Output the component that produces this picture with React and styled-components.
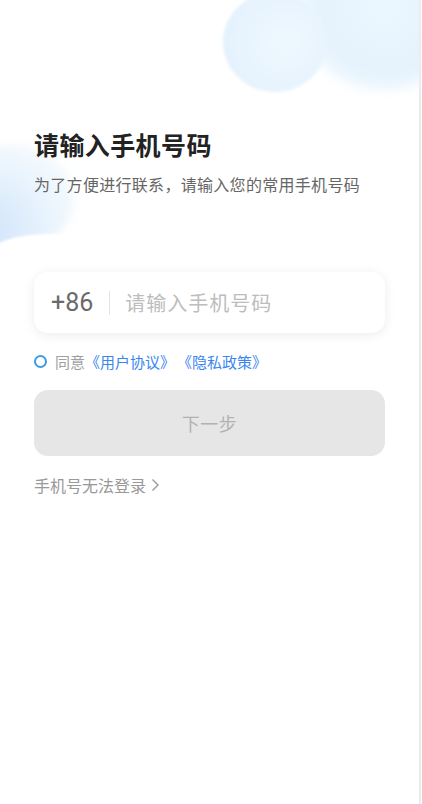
import React from "react";
import styled, { createGlobalStyle } from "styled-components";

const Global = createGlobalStyle`
  html, body { margin: 0; padding: 0; background: #fff; }
  body { font-family: "Noto Sans CJK SC", "Noto Sans", sans-serif; }
  * { box-sizing: border-box; }
`;

const Page = styled.div`
  position: relative;
  width: 421px;
  min-height: 804px;
  background: #fff;
  border-right: 2px solid #ececec;
  overflow: hidden;
`;

const Decor = styled.div`
  position: absolute;
  pointer-events: none;
  border-radius: 50%;
  filter: blur(${(p) => p.$blur || 2}px);
  left: ${(p) => p.$x}px;
  top: ${(p) => p.$y}px;
  width: ${(p) => p.$w}px;
  height: ${(p) => p.$h}px;
  background: ${(p) => p.$bg};
`;

const Content = styled.div`
  position: relative;
  display: flex;
  flex-direction: column;
  padding: 128px 34px 0 34px;
`;

const Title = styled.h1`
  margin: 0;
  font-size: 25px;
  line-height: 32px;
  font-weight: 700;
  color: #222;
  letter-spacing: 0.4px;
`;

const Subtitle = styled.p`
  margin: 12px 0 0;
  font-size: 16px;
  line-height: 24px;
  color: #666;
  letter-spacing: 0.3px;
`;

const PhoneCard = styled.div`
  margin-top: 76px;
  height: 61px;
  border-radius: 14px;
  background: #fff;
  box-shadow: 0 2px 12px rgba(0, 0, 0, 0.08);
  display: flex;
  align-items: center;
  padding-left: 17px;
`;

const Code = styled.span`
  font-family: "Roboto", "Noto Sans", sans-serif;
  font-size: 25px;
  color: #6a6a6a;
`;

const Divider = styled.span`
  width: 1px;
  height: 24px;
  background: #e3e3e3;
  margin: 0 15px 0 16px;
`;

const Placeholder = styled.span`
  font-size: 20px;
  color: #bdbdbd;
  letter-spacing: 1px;
`;

const AgreeRow = styled.div`
  margin-top: 18px;
  height: 20px;
  display: flex;
  align-items: center;
  font-size: 15px;
`;

const Radio = styled.span`
  width: 13px;
  height: 13px;
  border-radius: 50%;
  border: 2px solid #3a9de0;
  margin-right: 8px;
`;

const Gray = styled.span`
  color: #a0a0a0;
`;

const Link = styled.span`
  color: #3a86f0;
  margin-right: ${(p) => (p.$gap ? 2 : 0)}px;
`;

const NextButton = styled.div`
  margin-top: 19px;
  height: 66px;
  border-radius: 14px;
  background: #e6e6e6;
  display: flex;
  align-items: center;
  justify-content: center;
  font-size: 18px;
  color: #b2b2b2;
  letter-spacing: 0.5px;
`;

const Help = styled.div`
  margin-top: 18px;
  display: flex;
  align-items: center;
  gap: 4px;
  font-size: 16px;
  line-height: 22px;
  color: #999;
`;

export default function App() {
  return (
    <>
      <Global />
      <Page>
        <Decor $x={300} $y={-60} $w={170} $h={150} $blur={6}
          $bg="radial-gradient(ellipse at 50% 45%, rgba(234,247,255,0.95) 0%, rgba(222,239,252,0.8) 55%, rgba(235,244,252,0) 100%)" />
        <Decor $x={223} $y={-8} $w={104} $h={100} $blur={1.5}
          $bg="radial-gradient(circle at 60% 50%, #eef8fe 0%, #e7f3fd 60%, #e0eefb 100%)" />
        <Decor $x={-50} $y={145} $w={125} $h={105} $blur={5}
          $bg="radial-gradient(ellipse at 30% 80%, rgba(204,225,250,0.9) 0%, rgba(225,240,252,0.75) 50%, rgba(240,248,255,0) 100%)" />
        <Decor $x={-10} $y={234} $w={120} $h={40} $blur={1} $bg="#fff" />
        <Content>
          <Title>请输入手机号码</Title>
          <Subtitle>为了方便进行联系，请输入您的常用手机号码</Subtitle>
          <PhoneCard>
            <Code>+86</Code>
            <Divider />
            <Placeholder>请输入手机号码</Placeholder>
          </PhoneCard>
          <AgreeRow>
            <Radio />
            <Gray>同意</Gray>
            <Link $gap>《用户协议》</Link>
            <Link>《隐私政策》</Link>
          </AgreeRow>
          <NextButton>下一步</NextButton>
          <Help>
            手机号无法登录
            <svg width="10" height="14" viewBox="0 0 10 14" fill="none">
              <path d="M2.5 1.5 L8 7 L2.5 12.5" stroke="#999" strokeWidth="1.4" />
            </svg>
          </Help>
        </Content>
      </Page>
    </>
  );
}
